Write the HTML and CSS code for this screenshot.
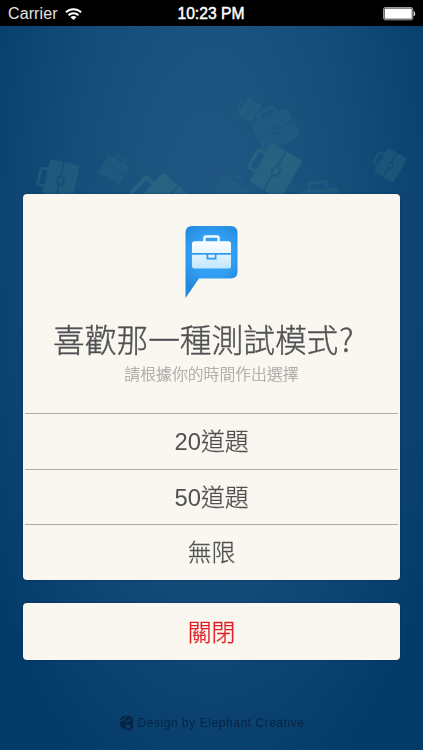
FILE: index.html
```html
<!DOCTYPE html>
<html lang="zh-Hant">
<head>
<meta charset="utf-8">
<title>測試模式</title>
<link rel="stylesheet" href="styles.css">
</head>
<body>
<svg class="backdrop" viewBox="0 0 423 750" aria-hidden="true">
  <defs>
    <mask id="case-cut" maskUnits="userSpaceOnUse" x="-24" y="-24" width="48" height="48">
      <rect x="-24" y="-24" width="48" height="48" fill="#fff"/>
      <path d="M-20 3H-4M4 3H20" stroke="#333" stroke-width="1.8"/>
      <rect x="-4" y="1" width="8" height="6" rx="1" fill="none" stroke="#333" stroke-width="1.8"/>
    </mask>
    <g id="case">
      <g mask="url(#case-cut)"><rect x="-20" y="-12" width="40" height="32" rx="3"/></g>
      <path d="M-9 -12V-17Q-9 -19 -7 -19H7Q9 -19 9 -17V-12" fill="none" stroke="currentColor" stroke-width="3"/>
    </g>
  </defs>
  <g class="cases">
    <use href="#case" transform="translate(248 109) rotate(-60) scale(.5)" opacity=".6"/>
    <use href="#case" transform="translate(274 127) rotate(-27) scale(1)" opacity=".5"/>
    <use href="#case" transform="translate(272 169) rotate(-60) scale(1.12)"/>
    <use href="#case" transform="translate(57 180) rotate(-77) scale(.95)" opacity=".7"/>
    <use href="#case" transform="translate(115 168) rotate(30) scale(.62)" opacity=".5"/>
    <use href="#case" transform="translate(157 203) rotate(-48) scale(1.35)"/>
    <use href="#case" transform="translate(232 190) rotate(27) scale(.75)" opacity=".45"/>
    <use href="#case" transform="translate(319 201) rotate(-6) scale(.98)" opacity=".6"/>
    <use href="#case" transform="translate(388 164) rotate(-60) scale(.7)" opacity=".6"/>
  </g>
</svg>

<header class="status">
  <div class="status-left">
    <span>Carrier</span>
    <svg class="wifi" viewBox="0 0 17 12" aria-hidden="true">
      <path d="M.9 4.300a10.800 10.800 0 0 1 15.200 0M3.500 7.200a7.100 7.100 0 0 1 10 0" fill="none" stroke="#fff" stroke-width="2"/>
      <path d="M5.500 9.200a4.200 4.200 0 0 1 6 0L8.500 12z" fill="#fff"/>
    </svg>
  </div>
  <span class="time">10:23 PM</span>
  <div class="status-right">
    <svg class="battery" viewBox="0 0 33 14" aria-hidden="true">
      <rect x=".6" y=".6" width="29.2" height="12.2" rx="1.6" fill="#000" stroke="#aaa" stroke-width="1"/>
      <rect x="1.6" y="1.6" width="27.2" height="10.2" rx=".6" fill="#fff"/>
      <path d="M31 4.500q1.800 2.200 0 4.400z" fill="#fff" stroke="#fff" stroke-width=".5"/>
    </svg>
  </div>
</header>

<main class="screen">
  <section class="card">
    <div class="intro">
      <svg class="logo" viewBox="0 0 53 74" aria-hidden="true">
        <defs>
          <radialGradient id="bubble" gradientUnits="userSpaceOnUse" cx="27" cy="30" r="38">
            <stop offset="0" stop-color="#38a8fa"/><stop offset=".55" stop-color="#319ff3"/><stop offset="1" stop-color="#2388d9"/>
          </radialGradient>
          <linearGradient id="shine" x1="0" y1="0" x2="0" y2="1">
            <stop offset="0" stop-color="#fff"/><stop offset="1" stop-color="#bfe7ff"/>
          </linearGradient>
        </defs>
        <path d="M7 1H45.500Q52.500 1 52.500 8V46.500Q52.500 53.500 45.500 53.500H14L.5 73V8Q.5 1 7 1Z" fill="url(#bubble)"/>
        <path d="M19.400 17.500V13Q19.400 11.500 20.900 11.500H32.100Q33.600 11.500 33.600 13V17.500" fill="none" stroke="#f4fbff" stroke-width="2.400"/>
        <rect x="7" y="16.200" width="39" height="27.300" rx="2.500" fill="url(#shine)"/>
        <path d="M7 28.800H46" stroke="#319cec" stroke-width="1.700"/>
        <path d="M22.400 28.800V33.600H30.600V28.800" fill="none" stroke="#319cec" stroke-width="1.700"/>
      </svg>
      <h1 class="title">喜歡那一種測試模式<span class="mark">?</span></h1>
      <p class="subtitle">請根據你的時間作出選擇</p>
    </div>
    <div class="options">
      <div class="option"><span class="label"><span class="digits">20</span>道題</span></div>
      <div class="option"><span class="label"><span class="digits">50</span>道題</span></div>
      <div class="option"><span class="label">無限</span></div>
    </div>
  </section>
  <div class="card close">關閉</div>
</main>

<footer class="credit">
  <svg class="elephant" viewBox="0 0 16 17" aria-hidden="true">
    <path d="M.8 6Q2 1.500 7 .5Q6.500 4 .8 6Z" fill="currentColor"/>
    <path d="M8.200 .5Q12.500 0 14.500 3.500Q15.300 8 14.800 13Q14 16.500 10 16.500Q6.500 16 6.300 12.800H8.200Q8.500 14.500 10.200 14.300Q12.300 13.800 11.800 11.600Q11 9.800 9 10.600Q6.500 11.500 5.800 15.500Q1 13.500 .5 7.800Q6.500 6.500 8.200 .5Z" fill="currentColor"/>
    <path d="M7.600 7.600Q9.500 4.600 12.800 5.600" fill="none" stroke="#0a426f" stroke-width="1.300"/>
  </svg>
  <span>Design by Elephant Creative</span>
</footer>
</body>
</html>
```
FILE: styles.css
```css
* { box-sizing: border-box; }

body {
  margin: 0;
  width: 423px;
  height: 750px;
  overflow: hidden;
  display: flex;
  flex-direction: column;
  background: radial-gradient(ellipse 275px 620px at 211px 230px, #205682 0%, #1d547f 25%, #164c78 52%, #0b4270 78%, #033b68 100%);
  font-family: "Liberation Sans", "Noto Sans CJK TC", sans-serif;
  color: #505153;
}

.backdrop {
  position: absolute;
  inset: 0;
  width: 423px;
  height: 750px;
  z-index: -1;
}

.cases { color: #296782; fill: #296782; opacity: .8; }

.status {
  flex: none;
  height: 26px;
  padding: 1px 7px 0 8px;
  display: grid;
  grid-template-columns: 1fr auto 1fr;
  align-items: center;
  background: #000;
  color: #fff;
  font-size: 16px;
}

.status-left { display: flex; align-items: center; gap: 7px; color: #e4e4e4; letter-spacing: .1px; }
.status-right { display: flex; justify-content: flex-end; }
.wifi { width: 17px; height: 12px; }
.battery { width: 33px; height: 14px; }
.time { margin-right: 2px; font-size: 15.700px; -webkit-text-stroke: .45px #fff; }

.screen {
  padding: 168px 23px 0;
  display: flex;
  flex-direction: column;
  gap: 23px;
}

.card {
  background: #faf7f0;
  border-radius: 4px;
  box-shadow: 0 0 2px rgba(0, 25, 55, .5);
}

.intro {
  height: 219px;
  padding-top: 31px;
  display: flex;
  flex-direction: column;
  align-items: center;
}

.logo { width: 53px; height: 74px; }

.title {
  margin: 16px 0 0;
  display: flex;
  font-size: 31.700px;
  line-height: 46px;
  font-weight: 300;
  font-family: "Noto Sans CJK TC", sans-serif;
  -webkit-text-stroke: .4px currentColor;
}

.mark { width: 1em; padding-left: 1px; }

.subtitle {
  margin: 3px 0 0;
  font-size: 15.850px;
  line-height: 22px;
  font-weight: 300;
  color: #a5a5a3;
  -webkit-text-stroke: .2px currentColor;
}

.digits { -webkit-text-stroke: 0; }

.options { padding: 0 2px; }

.option {
  height: 55.500px;
  padding-bottom: 3px;
  border-top: 1px solid #b3aaa0;
  display: flex;
  align-items: center;
  justify-content: center;
  font-size: 23.800px;
  font-weight: 300;
  -webkit-text-stroke: .3px currentColor;
}

.close {
  height: 57px;
  padding-bottom: 2px;
  display: flex;
  align-items: center;
  justify-content: center;
  font-size: 23.800px;
  font-weight: 300;
  color: #e01f26;
  -webkit-text-stroke: .3px currentColor;
}

.credit {
  margin-top: 54px;
  display: flex;
  align-items: center;
  justify-content: center;
  gap: 4px;
  font-size: 12px;
  line-height: 18px;
  letter-spacing: .55px;
  color: #062444;
}

.elephant { width: 15px; height: 16px; }
```
